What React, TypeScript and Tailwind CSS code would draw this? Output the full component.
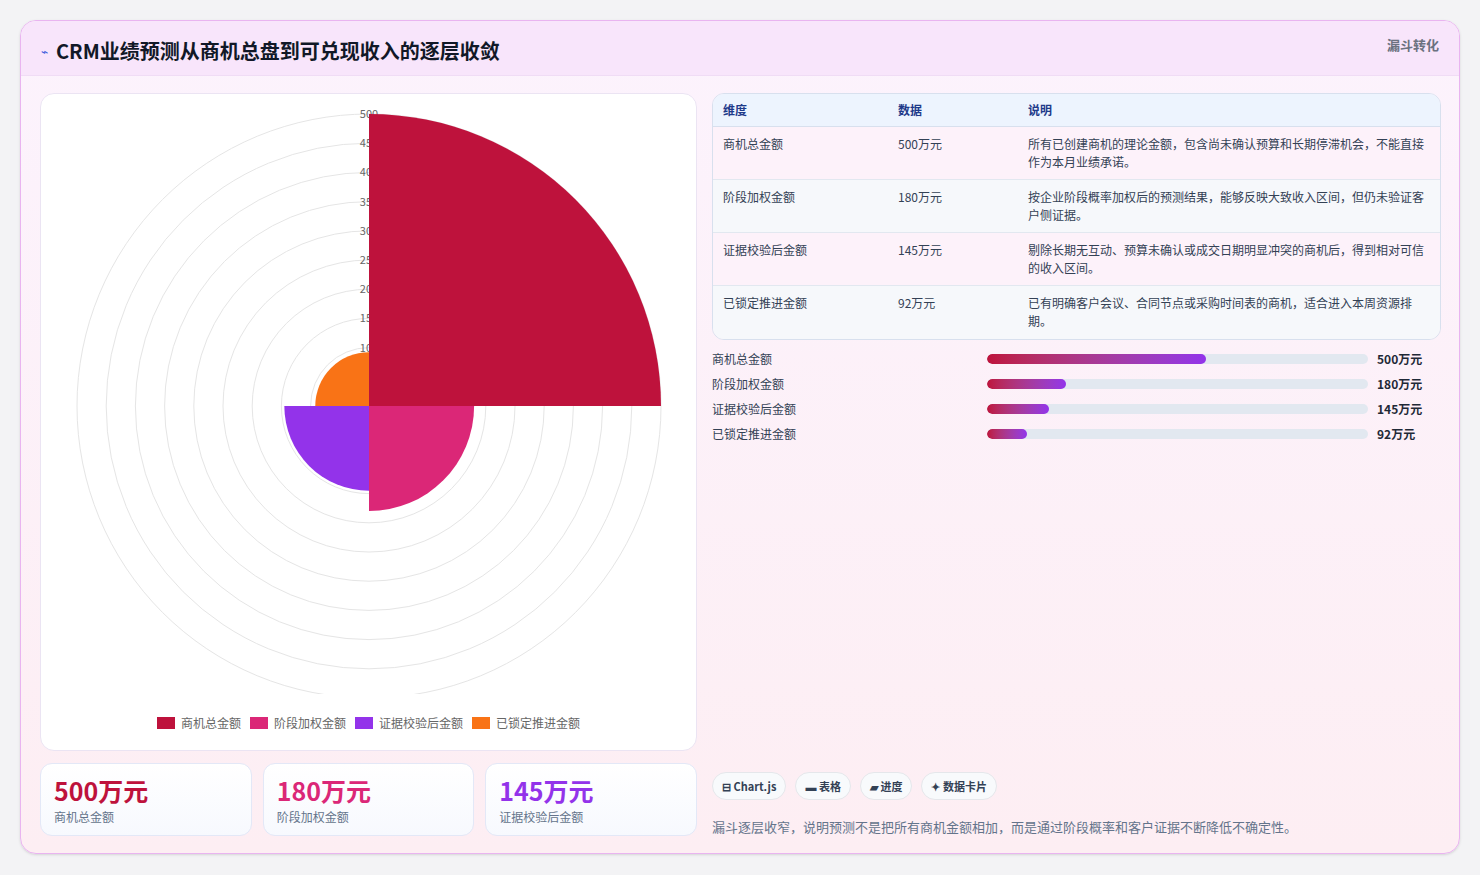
import React from "react";

const F = { fontFamily: '"Noto Sans CJK SC","Noto Sans",sans-serif' };

function arc(cx: number, cy: number, r: number, a0: number, a1: number) {
  const rad = (a: number) => (a * Math.PI) / 180;
  const x0 = cx + r * Math.cos(rad(a0)), y0 = cy + r * Math.sin(rad(a0));
  const x1 = cx + r * Math.cos(rad(a1)), y1 = cy + r * Math.sin(rad(a1));
  return `M${cx},${cy} L${x0},${y0} A${r},${r} 0 0 1 ${x1},${y1} Z`;
}

function Chart() {
  const cx = 328, cy = 312, k = 292 / 500;
  const rings = [50, 100, 150, 200, 250, 300, 350, 400, 450, 500];
  return (
    <svg width="657" height="600" className="block">
      {rings.map((v) => (
        <circle key={v} cx={cx} cy={cy} r={v * k} fill="none" stroke="#e5e5e5" strokeWidth="1" />
      ))}
      {rings.slice(1).map((v) => (
        <text key={v} x={cx} y={cy - v * k + 4} textAnchor="middle" fontSize="11" fill="#666" style={F}>{v}</text>
      ))}
      <path d={arc(cx, cy, 500 * k, -90, 0)} fill="#be123c" />
      <path d={arc(cx, cy, 180 * k, 0, 90)} fill="#db2777" />
      <path d={arc(cx, cy, 145 * k, 90, 180)} fill="#9333ea" />
      <path d={arc(cx, cy, 92 * k, 180, 270)} fill="#f97316" />
    </svg>
  );
}

const rows = [
  ["商机总金额", "500万元", "所有已创建商机的理论金额，包含尚未确认预算和长期停滞机会，不能直接作为本月业绩承诺。"],
  ["阶段加权金额", "180万元", "按企业阶段概率加权后的预测结果，能够反映大致收入区间，但仍未验证客户侧证据。"],
  ["证据校验后金额", "145万元", "剔除长期无互动、预算未确认或成交日期明显冲突的商机后，得到相对可信的收入区间。"],
  ["已锁定推进金额", "92万元", "已有明确客户会议、合同节点或采购时间表的商机，适合进入本周资源排期。"],
];
const bars = [["商机总金额", 57.5, "500万元"], ["阶段加权金额", 20.8, "180万元"], ["证据校验后金额", 16.3, "145万元"], ["已锁定推进金额", 10.5, "92万元"]] as const;

export default function App() {
  return (
    <div className="w-[1480px] h-[875px] bg-[#f3f3f5] pt-[20px] pl-[20px]" style={F}>
      <div className="w-[1440px] h-[834px] rounded-[16px] border border-[#e9b4f0] bg-gradient-to-b from-[#fcf3fd] to-[#fdeef3] overflow-hidden flex flex-col shadow-sm">
        <div className="h-[55px] shrink-0 bg-[#f8e5fb] border-b border-[#f0dcf5] flex items-start justify-between px-[20px]">
          <div className="flex items-center gap-[8px] mt-[15px]">
            <span className="text-[#3b5bdb] text-[12px]">⌁</span>
            <span className="text-[20px] font-bold text-[#111827]">CRM业绩预测从商机总盘到可兑现收入的逐层收敛</span>
          </div>
          <span className="mt-[14px] text-[13px] font-bold text-[#6b7280]">漏斗转化</span>
        </div>
        <div className="flex gap-[15px] pl-[19px] pr-[18px] pt-[17px]">
          <div className="w-[657px] flex flex-col gap-[12px]">
            <div className="h-[658px] rounded-[14px] bg-white border border-[#ebe4f3] relative">
              <div className="pt-[0px]"><Chart /></div>
              <div className="absolute left-0 right-0 top-[620px] flex justify-center gap-[9px] text-[12px] text-[#666]">
                {[["#be123c", "商机总金额"], ["#db2777", "阶段加权金额"], ["#9333ea", "证据校验后金额"], ["#f97316", "已锁定推进金额"]].map(([c, l]) => (
                  <div key={l} className="flex items-center gap-[6px]">
                    <span className="w-[18px] h-[12px]" style={{ background: c }} />
                    <span>{l}</span>
                  </div>
                ))}
              </div>
            </div>
            <div className="grid grid-cols-3 gap-[11px]">
              {[["500万元", "商机总金额", "text-[#be123c]"], ["180万元", "阶段加权金额", "text-[#db2777]"], ["145万元", "证据校验后金额", "text-[#9333ea]"]].map(([v, l, c]) => (
                <div key={l} className="h-[73px] rounded-[12px] border border-[#e3e8f7] bg-gradient-to-b from-white to-[#f7f9fe] px-[13px] pt-[10px]">
                  <div className={`text-[25px] font-bold leading-[32px] ${c}`}>{v}</div>
                  <div className="text-[12px] text-[#64748b] mt-[2px]">{l}</div>
                </div>
              ))}
            </div>
          </div>
          <div className="flex-1 flex flex-col">
            <div className="rounded-[12px] border border-[#d8e0ee] overflow-hidden text-[12px] text-[#334155]">
              <div className="grid grid-cols-[175px_130px_1fr] h-[33px] items-center bg-[#edf4fe] border-b border-[#d8e0ee] px-[10px] font-bold text-[#1e3a8a]">
                <span>维度</span><span>数据</span><span>说明</span>
              </div>
              {rows.map((r, i) => (
                <div key={r[0]} className={`grid grid-cols-[175px_130px_1fr] h-[53px] px-[10px] pt-[8px] leading-[18px] ${i < 3 ? "border-b border-[#e2e8f0]" : ""} ${i % 2 === 0 ? "bg-[#fdf2fa]" : "bg-[#f6f8fb]"}`}>
                  <span>{r[0]}</span><span>{r[1]}</span><span className="pr-[6px]">{r[2]}</span>
                </div>
              ))}
            </div>
            <div className="mt-[10px] flex flex-col gap-[8px]">
              {bars.map(([l, p, v]) => (
                <div key={l} className="flex items-center h-[17px] text-[12px] text-[#334155]">
                  <span className="w-[275px]">{l}</span>
                  <div className="w-[381px] h-[10px] rounded-full bg-[#e2e8f0] overflow-hidden">
                    <div className="h-full rounded-full bg-gradient-to-r from-[#be123c] to-[#9333ea]" style={{ width: `${p}%` }} />
                  </div>
                  <span className="ml-[9px] font-bold text-[#1f2937]">{v}</span>
                </div>
              ))}
            </div>
            <div className="flex-1" />
            <div className="mt-[330px] flex gap-[9px] text-[11px] font-bold text-[#334155]">
              {["⊟ Chart.js", "▬ 表格", "▰ 进度", "✦ 数据卡片"].map((t) => (
                <span key={t} className="h-[28px] px-[9px] flex items-center rounded-full border border-[#e5e7eb] bg-[#f8fafc]">{t}</span>
              ))}
            </div>
            <div className="mt-[17px] text-[13px] text-[#64748b]">漏斗逐层收窄，说明预测不是把所有商机金额相加，而是通过阶段概率和客户证据不断降低不确定性。</div>
          </div>
        </div>
      </div>
    </div>
  );
}
